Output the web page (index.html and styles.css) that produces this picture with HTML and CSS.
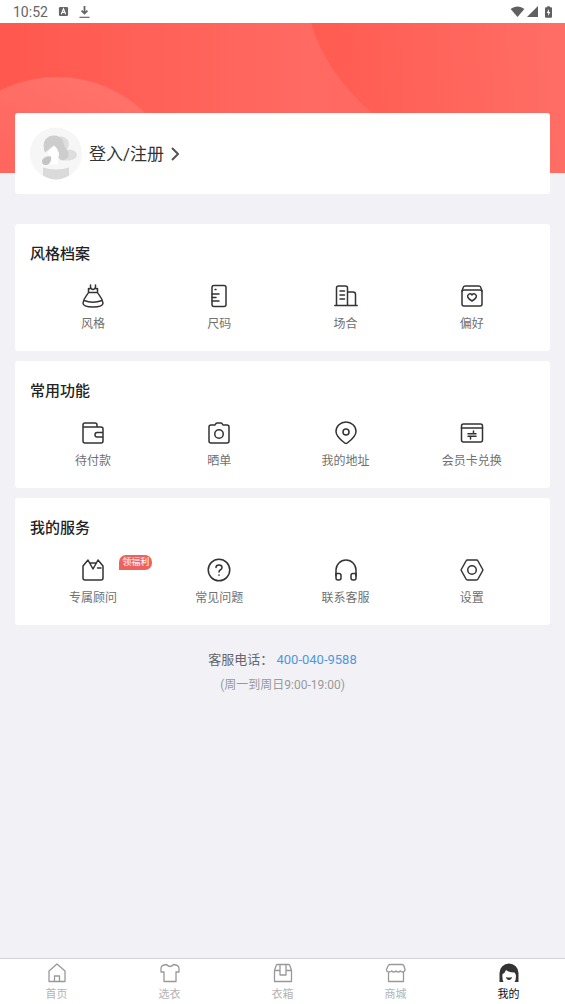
FILE: index.html
```
<!DOCTYPE html>
<html lang="zh-CN">
<head>
<meta charset="utf-8">
<meta name="viewport" content="width=device-width, initial-scale=1">
<title>我的</title>
<link rel="stylesheet" href="styles.css">
</head>
<body>
<header class="status">
  <div class="status-group">
    <time class="clock">10:52</time>
    <svg class="status-icon" viewBox="0 0 12 12" aria-hidden="true"><rect x="1" y="1" width="10" height="10" rx="1.5" fill="#666"/><path d="M3.6 9 6 3l2.400 6M4.500 7h3" fill="none" stroke="#fff" stroke-width="1.200"/></svg>
    <svg class="status-icon tall" viewBox="0 0 12 14" aria-hidden="true"><path d="M6 .5v8M2.800 5.500 6 8.700 9.200 5.500" fill="none" stroke="#666" stroke-width="2"/><path d="M.5 12.800h11" stroke="#666" stroke-width="1.300"/></svg>
  </div>
  <div class="status-group signals">
    <svg class="wifi" viewBox="0 0 16 12" aria-hidden="true"><path d="M.5 3.200C5-.5 11-.5 15.500 3.200L8 12z" fill="#606060"/></svg>
    <svg class="status-icon" viewBox="0 0 12 12" aria-hidden="true"><path d="M12 0v12H0z" fill="#606060"/></svg>
    <svg class="battery" viewBox="0 0 8 13" aria-hidden="true"><path d="M2.500 0h3v1H7q1 0 1 1v10q0 1-1 1H1q-1 0-1-1V2q0-1 1-1h1.500z" fill="#606060"/><path d="M4.600 3 2 7.500h1.700V11L6 6.500H4.600z" fill="#fff"/></svg>
  </div>
</header>

<main class="page">
  <svg class="hero" viewBox="0 0 565 150" preserveAspectRatio="xMidYMid slice" aria-hidden="true">
    <defs>
      <linearGradient id="base" x1="0" y1="0" x2="1" y2="0"><stop offset="0" stop-color="#ff584e"/><stop offset=".55" stop-color="#ff6a62"/><stop offset="1" stop-color="#ff645b"/></linearGradient>
      <linearGradient id="right" gradientUnits="userSpaceOnUse" x1="315" y1="60" x2="565" y2="40"><stop offset="0" stop-color="#ff5b51"/><stop offset="1" stop-color="#ff6e65"/></linearGradient>
      <linearGradient id="left" gradientUnits="userSpaceOnUse" x1="60" y1="54" x2="20" y2="150"><stop offset="0" stop-color="#ff7169"/><stop offset="1" stop-color="#ff665e"/></linearGradient>
    </defs>
    <rect width="565" height="150" fill="url(#base)"/>
    <path d="M311 0Q326 50 372 90L430 150H565V0z" fill="url(#right)"/>
    <circle cx="57" cy="181" r="127" fill="url(#left)"/>
  </svg>

  <a class="card login" href="#login">
    <svg class="avatar" viewBox="0 0 52 52" aria-hidden="true">
      <circle cx="26" cy="26" r="26" fill="#f6f6f6"/>
      <path d="M25 10q9-3 13 3 2 5-1 9 9 0 10 5 0 5-8 6l-8 0-6-14z" fill="#dedede"/>
      <path d="M14 22q-2-9 5-13 9-3 14 4 1 7 5 11 2 6-3 8-5 2-7-3l-5-10-8 6z" fill="#cdcdcd"/>
      <path d="M18 27q1-6 6-9 5 4 5 10l-1 2v7h-8v-7z" fill="#fff"/>
      <path d="M12 33q3-5 9-4 1 5-3 8-6 2-6-4z" fill="#c4c4c4"/>
      <path d="M13 40q13 4 26 0v8q-13 8-26 0z" fill="#dadada"/>
    </svg>
    <span>登入/注册</span>
    <svg class="chevron" viewBox="0 0 8 14" aria-hidden="true"><path d="m1 1 6 6-6 6"/></svg>
  </a>

  <section class="card group">
    <h2>风格档案</h2>
    <div class="grid">
      <a class="item" href="#style"><svg class="icon" viewBox="0 0 24 24" aria-hidden="true"><path d="M9.500 1v3.500M14.500 1v3.500M7.500 8.500V4.500q1.500.5 2.500-.5 1 1.500 2 1.500t2-1.500q1 1 2.500.5v4zM7.500 8.500C6 11.500 2.500 14 2 19q0 4 10 4t10-4c-.5-5-4-7.500-5.500-10.500M3 16.500q9 3.500 18 0"/></svg>风格</a>
      <a class="item" href="#size"><svg class="icon" viewBox="0 0 24 24" aria-hidden="true"><rect x="5" y="1.500" width="14" height="21" rx="2"/><path d="M8 5.500h1M5 10h7M5 13.500h4M5 17h7"/></svg>尺码</a>
      <a class="item" href="#occasion"><svg class="icon" viewBox="0 0 24 24" aria-hidden="true"><path d="M.800 21.500h22.400M2.500 21V4q0-2 2-2h7q2 0 2 2v17M13.500 8H19q2.500 0 2.500 2.500V21M6 7h4.500M6 11h4.500M6 15h4.500"/></svg>场合</a>
      <a class="item" href="#preference"><svg class="icon" viewBox="0 0 24 24" aria-hidden="true"><path d="m2 7 1-3q.5-2 2-2h14q1.500 0 2 2l1 3"/><rect x="2" y="6" width="20" height="16" rx="2"/><path d="M12 17q-6.500-4-3.500-6.500Q10.500 9 12 11q1.500-2 3.500-.5Q18.500 13 12 17z"/></svg>偏好</a>
    </div>
  </section>

  <section class="card group">
    <h2>常用功能</h2>
    <div class="grid">
      <a class="item" href="#unpaid"><svg class="icon" viewBox="0 0 24 24" aria-hidden="true"><path d="M2 6V4q0-2 2-2h10q2 0 2 2v2M2 6h18q2 0 2 2v12q0 2-2 2H4q-2 0-2-2zM22 11.500h-6q-2 0-2 2.250T16 16h6"/></svg>待付款</a>
      <a class="item" href="#share"><svg class="icon" viewBox="0 0 24 24" aria-hidden="true"><path d="M4 4h4q1-2 2-2h4q1 0 2 2h4q2 0 2 2v14q0 2-2 2H4q-2 0-2-2V6q0-2 2-2z"/><circle cx="12" cy="13" r="4.250"/></svg>晒单</a>
      <a class="item" href="#address"><svg class="icon" viewBox="0 0 24 24" aria-hidden="true"><path d="M12 22.500q-1 0-2.500-1.500Q2 15 2 10.500a10 9.500 0 0 1 20 0Q22 15 14.500 21q-1.500 1.500-2.500 1.500z"/><circle cx="12" cy="11" r="3"/></svg>我的地址</a>
      <a class="item" href="#exchange"><svg class="icon" viewBox="0 0 24 24" aria-hidden="true"><rect x="1.500" y="3" width="21" height="18" rx="2"/><path d="M1.500 7h21M8 12.800h8M13.500 10v2.800M16 15.200H8M10.500 15.200V18"/></svg>会员卡兑换</a>
    </div>
  </section>

  <section class="card group">
    <h2>我的服务</h2>
    <div class="grid">
      <a class="item" href="#advisor"><svg class="icon" viewBox="0 0 24 24" aria-hidden="true"><path d="M2 20V8l5-6 5 9 5-9 5 6v12q0 2-2 2H4q-2 0-2-2zM8.500 5h7M16.500 10H20"/></svg>专属顾问<span class="badge">领福利</span></a>
      <a class="item" href="#faq"><svg class="icon" viewBox="0 0 24 24" aria-hidden="true"><circle cx="12" cy="12" r="10.750"/><path d="M9 9.500Q9 7 12 7t3 2.500q0 1.500-1.500 2.250T12 14M12 17v.2"/></svg>常见问题</a>
      <a class="item" href="#support"><svg class="icon" viewBox="0 0 24 24" aria-hidden="true"><path d="M2 18v-6a10 10 0 0 1 20 0v6"/><path d="M2 15.500h3q2 0 2 2V20q0 2-2 2H4q-2 0-2-2zM22 15.500h-3q-2 0-2 2V20q0 2 2 2h1q2 0 2-2z"/></svg>联系客服</a>
      <a class="item" href="#settings"><svg class="icon" viewBox="0 0 24 24" aria-hidden="true"><path d="M7.500 2h9q1 0 1.500 1l5 9-5 9q-.5 1-1.500 1h-9q-1 0-1.500-1l-5-9 5-9q.5-1 1.500-1z"/><circle cx="12" cy="12" r="4.250"/></svg>设置</a>
    </div>
  </section>

  <footer class="contact">
    <p class="phone">客服电话： <a href="tel:400-040-9588">400-040-9588</a></p>
    <p class="hours">(周一到周日9:00-19:00)</p>
  </footer>
</main>

<nav class="tabs">
  <a class="tab" href="#home"><svg class="tab-icon" viewBox="0 0 20 20" aria-hidden="true"><path d="M2 18.500V8l8-7 8 7v10.500zM7.500 18v-5h5v5"/></svg>首页</a>
  <a class="tab" href="#choose"><svg class="tab-icon" viewBox="0 0 20 20" aria-hidden="true"><path d="M6.500 1.500q3.500 4 7 0Q19 2 19 5.500v3.500h-3v9.500H4V9H1V5.500Q1 2 6.500 1.500z"/></svg>选衣</a>
  <a class="tab" href="#box"><svg class="tab-icon" viewBox="0 0 20 20" aria-hidden="true"><path d="M1.500 7.500 3 3q.3-1.500 1.500-1.500h11Q16.700 1.500 17 3l1.500 4.500v11h-17zM1.500 7.500H7m6 0h5.500M7 2v10h6V2"/></svg>衣箱</a>
  <a class="tab" href="#mall"><svg class="tab-icon" viewBox="0 0 20 20" aria-hidden="true"><path d="M4 1.500h12q1.500 0 2 1.500l1 3.500q0 2.500-2.500 2.500-1.500 0-2.300-1.200Q13.500 9 12 9t-2-1.200Q9.500 9 8 9T5.800 7.800Q5 9 3 9 .5 9 .5 6.500L2 3q.5-1.500 2-1.500zM2.500 9v9.500h15V9"/></svg>商城</a>
  <a class="tab active" href="#mine" aria-current="page"><svg class="tab-icon" viewBox="0 0 20 20" aria-hidden="true"><path class="solid" d="M.5 19V10a9.500 9.500 0 0 1 19 0v9h-4q1.500-2 1.500-6 0-2-1.500-3.500Q10 9.500 7 7q-1 3-3.500 4-.5 5 1 8z"/><path class="solid" d="M7 14q3 1 6 0-.5 3-3 3t-3-3z"/></svg>我的</a>
</nav>
</body>
</html>
```

FILE: styles.css
```
* {
  box-sizing: border-box;
}

body {
  display: flex;
  flex-direction: column;
  min-height: 100vh;
  margin: 0;
  background: #f2f1f6;
  color: #222;
  font-family: Roboto, "Noto Sans CJK SC", sans-serif;
}

a {
  color: inherit;
  text-decoration: none;
}

svg {
  display: block;
}

.status {
  display: flex;
  align-items: center;
  justify-content: space-between;
  height: 23px;
  padding: 0 13px;
  background: #fff;
}

.status-group {
  display: flex;
  align-items: center;
  gap: 10px;
}

.signals {
  gap: 2px;
}

.clock {
  color: #666;
  font-size: 14px;
  line-height: 20px;
}

.status-icon {
  width: 11px;
  height: 11px;
}

.tall {
  height: 14px;
}

.wifi {
  width: 15px;
  height: 11px;
}

.battery {
  width: 7px;
  height: 12px;
  margin-left: 5px;
}

.page {
  display: flex;
  flex: 1;
  flex-direction: column;
  gap: 10px;
  padding: 0 15px;
}

.hero {
  width: calc(100% + 30px);
  height: 150px;
  margin: 0 -15px;
}

.card {
  border-radius: 3px;
  background: #fff;
}

.login {
  display: flex;
  z-index: 1;
  align-items: center;
  gap: 7px;
  margin: -70px 0 20px;
  padding: 14px 15px;
  color: #333;
  font-size: 17px;
  line-height: 24px;
}

.avatar {
  width: 52px;
  height: 53px;
}

.chevron {
  width: 8px;
  height: 14px;
  fill: none;
  stroke: #555;
  stroke-width: 2;
}

.group {
  padding: 18px 15px;
}

.group h2 {
  margin: 0;
  font-size: 15px;
  font-weight: 500;
  line-height: 24px;
}

.grid {
  display: grid;
  grid-template-columns: repeat(4, 1fr);
  margin-top: 18px;
}

.item {
  display: flex;
  position: relative;
  flex-direction: column;
  align-items: center;
  gap: 7px;
  color: #707070;
  font-size: 12px;
  line-height: 18px;
}

.icon {
  width: 24px;
  height: 24px;
  fill: none;
  stroke: #333;
  stroke-linecap: round;
  stroke-linejoin: round;
  stroke-width: 1.5;
}

.badge {
  position: absolute;
  top: -3px;
  left: calc(50% + 26px);
  padding: 0 3px;
  border-radius: 7px 7px 7px 0;
  background: #ee625e;
  color: #fff;
  font-size: 9px;
  line-height: 15px;
}

.contact {
  padding: 15px 0 24px;
  text-align: center;
}

.contact p {
  margin: 0;
}

.phone {
  color: #666;
  font-size: 13px;
  line-height: 20px;
}

.phone a {
  color: #4f97dc;
}

.contact .hours {
  margin-top: 7px;
  color: #999;
  font-size: 12px;
  line-height: 16px;
}

.tabs {
  display: grid;
  grid-template-columns: repeat(5, 1fr);
  height: 46px;
  border-top: 1px solid #d5d5d8;
  background: #fff;
}

.tab {
  display: flex;
  flex-direction: column;
  align-items: center;
  gap: 4px;
  padding-top: 4px;
  color: #b4b4b4;
  font-size: 11px;
  line-height: 16px;
}

.tab.active {
  color: #111;
}

.tab-icon {
  width: 20px;
  height: 20px;
  fill: none;
  stroke: #999;
  stroke-linejoin: round;
  stroke-width: 1.3;
}

.tab-icon .solid {
  fill: #333;
  stroke: none;
}
```
